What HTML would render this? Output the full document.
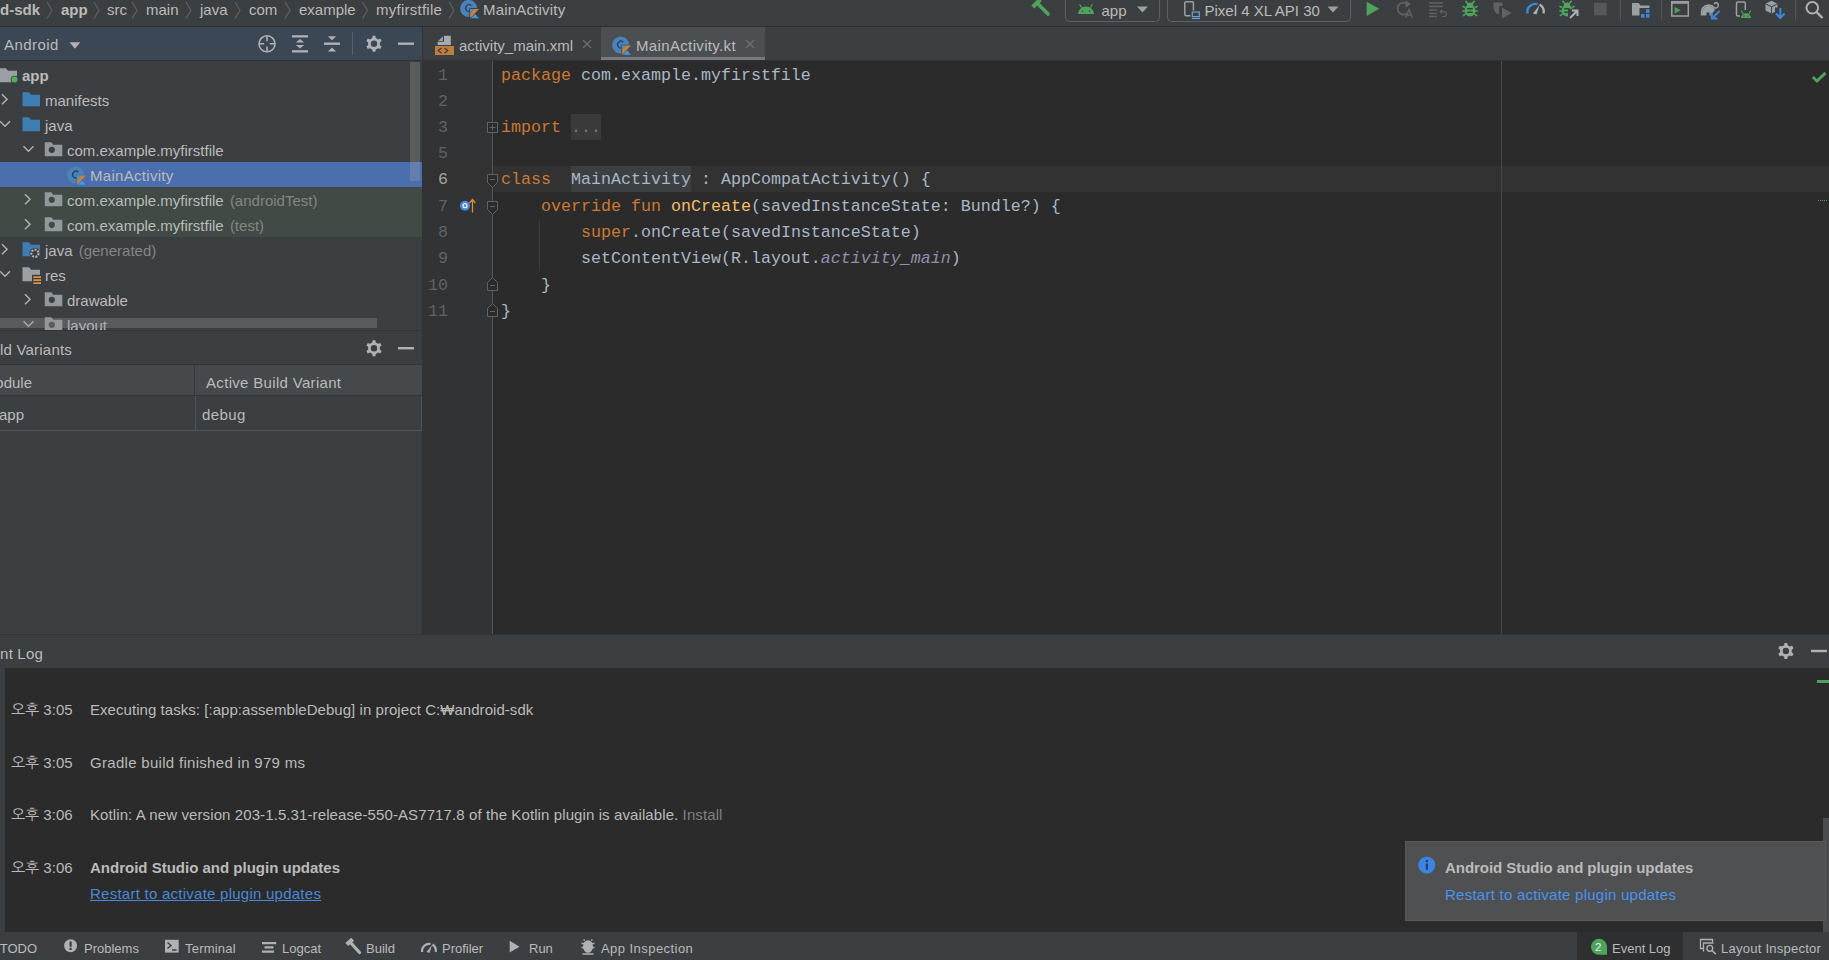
<!DOCTYPE html>
<html lang="en">
<head>
<meta charset="utf-8">
<title>android-sdk – MainActivity.kt</title>
<style>
*{box-sizing:border-box;margin:0;padding:0}
html,body{width:1829px;height:960px;overflow:hidden;background:#3c3f41}
body{position:relative;font-family:"Liberation Sans","NanumGothic","Noto Sans CJK KR",sans-serif;font-size:15px;color:#bbbbbb;-webkit-font-smoothing:antialiased}
.abs{position:absolute}
.t{position:absolute;white-space:nowrap;line-height:20px;height:20px}
.b{font-weight:bold}
.g{color:#858585}
svg{position:absolute;overflow:visible}
/* top nav */
#nav{left:0;top:0;width:1829px;height:26px;background:#3c3f41}
#navline{left:0;top:26px;width:1829px;height:1px;background:#2d2f31}
.sep{position:absolute;top:3px;width:8px;height:20px}
/* project panel */
#phead{left:0;top:27px;width:422px;height:33px;background:#3b4754}
#pheadline{left:0;top:60px;width:422px;height:1px;background:#323537}
#tree{left:0;top:61px;width:422px;height:269px;background:#3c3f41;overflow:hidden}
.row{position:absolute;left:0;width:422px;height:25px}
/* editor */
#tabs{left:422px;top:27px;width:1407px;height:33px;background:#3c3f41}
#tabsline{left:422px;top:60px;width:1407px;height:1px;background:#323232}
#gutter{left:422px;top:61px;width:70px;height:573px;background:#313335}
#gline{left:492px;top:61px;width:1px;height:573px;background:#555555}
#ed{left:493px;top:61px;width:1336px;height:573px;background:#2b2b2b}
.code{position:absolute;white-space:pre;font-family:"Liberation Mono",monospace;font-size:16.667px;line-height:26px;height:26px;color:#a9b7c6;left:501px}
.ln{position:absolute;font-family:"Liberation Mono",monospace;font-size:16.667px;line-height:26px;height:26px;color:#606366;width:30px;text-align:right;left:418px}
.k{color:#cc7832}.f{color:#f4be6c}.i{color:#8e90ad;font-style:italic}
</style>
</head>
<body>
<!-- ===== top navigation bar ===== -->
<div id="nav" class="abs">
<span class="t b" style="right:1789px;top:0px">android-sdk</span>
<span class="t b" style="left:61px;top:0px">app</span>
<span class="t" style="left:107px;top:0px">src</span>
<span class="t" style="left:146px;top:0px">main</span>
<span class="t" style="left:200px;top:0px">java</span>
<span class="t" style="left:249px;top:0px">com</span>
<span class="t" style="left:299px;top:0px">example</span>
<span class="t" style="left:376px;top:0px;letter-spacing:.25px">myfirstfile</span>
<span class="t" style="left:483px;top:0px;letter-spacing:.2px">MainActivity</span>
<svg style="left:0;top:0" width="600" height="27" fill="none" stroke="#606366" stroke-width="1.1">
<path d="M47 2l5 8.300-5 8.300M94 2l5 8.300-5 8.300M132 2l5 8.300-5 8.300M186 2l5 8.300-5 8.300M235 2l5 8.300-5 8.300M285 2l5 8.300-5 8.300M362.500 2l5 8.300-5 8.300M449 2l5 8.300-5 8.300"/>
</svg>
<!-- kotlin class icon -->
<svg style="left:460px;top:0px" width="20" height="19" viewBox="0 0 20 19">
<circle cx="8.700" cy="8.500" r="8.600" fill="#4b83b8"/><path d="M11.200 5.700A3.300 3.300 0 1 0 11.200 10.500" fill="none" stroke="#2a4468" stroke-width="1.400"/><rect x="9.300" y="8.100" width="10" height="10.500" fill="#3c3f41"/><path d="M10.200 9h4l-4 4z" fill="#3a9bf0"/><path d="M14.200 9h4.800l-8.800 9.200v-5.200z" fill="#c8823c"/><path d="M11 18.200l4-4.200 4 4.200z" fill="#3a9bf0"/>
</svg>
<!-- right toolbar -->
<svg id="tb" style="left:1020px;top:0;overflow:hidden" width="809" height="27" viewBox="1020 0 809 27">
<!-- hammer -->
<path d="M1032.800 7l7.500-7.500" stroke="#4fa35c" stroke-width="4.200" fill="none"/><path d="M1037.500 3.500l10.500 10.500" stroke="#4fa35c" stroke-width="3.600" stroke-linecap="round" fill="none"/>
<!-- combos -->
<rect x="1065.500" y="-4.500" width="94" height="26" rx="4" fill="none" stroke="#5e6062"/>
<rect x="1167.500" y="-4.500" width="183" height="26" rx="4" fill="none" stroke="#5e6062"/>
<path d="M1078 14a8.0 7.60 0 0 1 16 0z" fill="#4fa35c"/><path d="M1081.60 7.60l-2-3.400M1090.40 7.60l2-3.400" stroke="#4fa35c" stroke-width="1.100" fill="none"/><circle cx="1082.64" cy="10.96" r=".700" fill="#3c3f41"/><circle cx="1089.36" cy="10.96" r=".700" fill="#3c3f41"/>
<path d="M1137 6.500h11l-5.500 6z" fill="#9aa0a4"/>
<path d="M1327.500 6.500h11l-5.500 6z" fill="#9aa0a4"/>
<!-- device icon -->
<rect x="1184.800" y="1.800" width="8.600" height="14" rx="1.300" fill="none" stroke="#9aa0a4" stroke-width="1.500"/>
<rect x="1190.500" y="10.500" width="10" height="9" fill="#3c3f41"/><rect x="1192.300" y="12" width="7" height="4.600" fill="none" stroke="#6d9fd8" stroke-width="1.200"/><path d="M1192 18.500h8" stroke="#6d9fd8" stroke-width="1.200"/>
<!-- run -->
<path d="M1366.700 1.700v14.300l12.600-7.150z" fill="#4fa35c"/>
<!-- rerun (disabled) -->
<path d="M1408 4.500a6 6 0 1 0 -1 9" fill="none" stroke="#5f6365" stroke-width="1.800"/><path d="M1405.500 0.500l5.500 3.500-5.500 4z" fill="#5f6365"/>
<path d="M1405.800 17.500l3.200-8 3.200 8M1407 15h4" fill="none" stroke="#5f6365" stroke-width="1.400"/>
<!-- attach lines (disabled) -->
<path d="M1429 3h14M1429 6.500h14M1429 10h8M1429 13.500h8M1429 16.500h8" stroke="#5f6365" stroke-width="1.500"/>
<path d="M1440.500 11.500h3.500a2.500 2.500 0 0 1 0 5h-2M1442.500 9.500l-2.300 2 2.300 2" fill="none" stroke="#5f6365" stroke-width="1.200"/>
<!-- debug -->
<ellipse cx="1470" cy="10.5" rx="5.400" ry="6" fill="#4fa35c"/><ellipse cx="1470" cy="4.9" rx="3.200" ry="2.400" fill="#4fa35c"/><path d="M1467.5 3.5l-2-2.800M1472.5 3.5l2-2.800M1465 7.5l-2.600-1.200M1475 7.5l2.600-1.200M1465 11.0h-2.800M1475 11.0h2.800M1465.5 14.0l-2.600 1.800M1474.5 14.0l2.600 1.800" stroke="#4fa35c" stroke-width="1.600" fill="none"/><path d="M1467.2 8.8h5.600M1467.2 12.3h5.600" stroke="#3c3f41" stroke-width="1.400"/>
<!-- coverage (disabled) -->
<path d="M1493.500 2.500h9v3.500h-3.500v7l-1 1.500c-3-2-4.500-4.500-4.500-8z" fill="#5f6365"/><path d="M1502 7.500v11l9.500-5.500z" fill="#5f6365"/>
<!-- profiler -->
<path d="M1527.500 13.500a8 8 0 0 1 10-9.300" fill="none" stroke="#3d86e0" stroke-width="2.400"/>
<path d="M1539.500 4.500a8 8 0 0 1 4 9" fill="none" stroke="#afb1b3" stroke-width="2.400"/>
<path d="M1533 13.500l6.500-8.500-3 9.500z" fill="#afb1b3"/>
<!-- debug attach -->
<ellipse cx="1567" cy="10.5" rx="5.400" ry="6" fill="#4fa35c"/><ellipse cx="1567" cy="4.9" rx="3.200" ry="2.400" fill="#4fa35c"/><path d="M1564.5 3.5l-2-2.800M1569.5 3.5l2-2.800M1562 7.5l-2.600-1.200M1572 7.5l2.600-1.200M1562 11.0h-2.800M1572 11.0h2.800M1562.5 14.0l-2.600 1.800M1571.5 14.0l2.600 1.800" stroke="#4fa35c" stroke-width="1.600" fill="none"/><path d="M1564.2 8.8h5.600M1564.2 12.3h5.600" stroke="#3c3f41" stroke-width="1.400"/>
<rect x="1568" y="9" width="11" height="11" fill="#3c3f41"/>
<path d="M1570 18l7-7M1572 10.500h5.500v5.500" fill="none" stroke="#afb1b3" stroke-width="2"/>
<!-- stop (disabled) -->
<rect x="1594" y="2.800" width="12.600" height="12.600" fill="#56595b"/>
<!-- separators -->
<path d="M1620.500 0v20.500M1661.500 0v20.500M1795.500 0v20.500" stroke="#515456"/>
<!-- project structure -->
<path d="M1632 3h6.500l2 2.500h9v10h-17.500z" fill="#9aa0a4"/><rect x="1639.500" y="8" width="11" height="11" fill="#3c3f41"/>
<rect x="1641" y="14.100" width="3.600" height="3.600" fill="#3d86e0"/><rect x="1646" y="14.100" width="3.600" height="3.600" fill="#3d86e0"/><rect x="1646" y="9.300" width="3.600" height="3.600" fill="#3d86e0"/>
<!-- run window -->
<rect x="1671.800" y="2" width="16.500" height="14" fill="none" stroke="#9aa0a4" stroke-width="1.500"/><path d="M1671 2.500h18" stroke="#9aa0a4" stroke-width="2.500"/>
<path d="M1674.700 7v6.500l6-3.250z" fill="#4fa35c"/>
<!-- gradle elephant -->
<path d="M1701.500 15.500c-0.500-6 2-10 7-10.500 3 0 5 1.500 6.500 3 1.800 0.300 3.300-0.700 3.300-2.700 0-1.600-1-2.600-2.300-2.600-1 0-1.700 0.700-1.700 1.500" fill="none" stroke="#9aa0a4" stroke-width="1.500"/>
<path d="M1702 15.500c0-6 2-9.500 6.500-9.800 3 0 5.500 2 6.500 4.300l-3 3.500v2h-2.500v-3h-3v3h-4.500z" fill="#9aa0a4"/>
<path d="M1719.500 11l-7 7M1711.800 13v5.600h5.700" fill="none" stroke="#3d86e0" stroke-width="2"/>
<!-- avd manager -->
<rect x="1736.500" y="2" width="8.800" height="14" rx="1.300" fill="none" stroke="#9aa0a4" stroke-width="1.500"/>
<rect x="1740" y="10" width="12" height="9" fill="#3c3f41"/>
<path d="M1741 18a5.0 4.75 0 0 1 10 0z" fill="#4fa35c"/><path d="M1743.25 14.00l-2-3.400M1748.75 14.00l2-3.400" stroke="#4fa35c" stroke-width="1.100" fill="none"/><circle cx="1743.90" cy="16.10" r=".700" fill="#3c3f41"/><circle cx="1748.10" cy="16.10" r=".700" fill="#3c3f41"/>
<!-- sdk manager -->
<path d="M1771.500 0.800l6 3v6.700l-6 3-6-3v-6.700z" fill="#9aa0a4"/><path d="M1765.500 3.800l6 3 6-3M1771.500 6.800v6.700" fill="none" stroke="#3c3f41" stroke-width="1"/>
<rect x="1775" y="7.500" width="11" height="12" fill="#3c3f41"/>
<path d="M1780.300 8v9M1776 13.500l4.300 4.500 4.300-4.500" fill="none" stroke="#3d86e0" stroke-width="2"/>
<!-- search -->
<circle cx="1812.300" cy="7.800" r="5.800" fill="none" stroke="#afb1b3" stroke-width="2"/><path d="M1816.500 12l6 6" stroke="#afb1b3" stroke-width="2.400"/>
</svg>
<span class="t" style="left:1101.500px;top:1px">app</span>
<span class="t" style="left:1204.500px;top:1px">Pixel 4 XL API 30</span>
</div>
<div id="navline" class="abs"></div>

<!-- ===== project tool window ===== -->
<div id="phead" class="abs">
<span class="t" style="left:4px;top:8px;letter-spacing:.45px">Android</span>
<svg style="left:0;top:0" width="422" height="33" viewBox="0 27 422 33">
<path d="M69.500 42.300h10.800l-5.400 6.500z" fill="#afb1b3"/>
<g fill="none" stroke="#afb1b3" stroke-width="1.6">
<circle cx="267" cy="43.8" r="8"/><path d="M267 36v5.2M267 46.4v5.2M259 43.8h5.2M269.8 43.8h5.2"/>
</g>
<g fill="#afb1b3">
<rect x="292" y="35.2" width="16" height="2.3"/><rect x="292" y="50.2" width="16" height="2.3"/>
<path d="M295.8 42.6h8.4l-4.2-3.6zM295.8 45h8.4l-4.2 3.6z"/>
<rect x="324" y="42.5" width="16" height="2.4"/>
<path d="M327.8 36.3h8.4l-4.2 4zM327.8 51.4h8.4l-4.2-4z"/>
<rect x="352" y="32" width="1" height="23" fill="#55606b"/>
<rect x="398" y="42.5" width="16" height="2.4"/>
</g>
<path transform="translate(374 43.8)" fill="#afb1b3" fill-rule="evenodd" d="M-1.77 -5.73L-1.37 -7.98L1.37 -7.98L1.77 -5.73L4.08 -4.40L6.23 -5.18L7.60 -2.80L5.85 -1.33L5.85 1.33L7.60 2.80L6.23 5.18L4.08 4.40L1.77 5.73L1.37 7.98L-1.37 7.98L-1.77 5.73L-4.08 4.40L-6.23 5.18L-7.60 2.80L-5.85 1.33L-5.85 -1.33L-7.60 -2.80L-6.23 -5.18L-4.08 -4.40ZM3.20 0A3.20 3.20 0 1 0 -3.20 0A3.20 3.20 0 1 0 3.20 0Z"/>
</svg>
</div>
<div id="pheadline" class="abs"></div>
<div id="tree" class="abs">
<div class="abs" style="left:0;top:101px;width:422px;height:25px;background:#4b6eaf"></div>
<div class="abs" style="left:0;top:126px;width:422px;height:50px;background:#414a44"></div>
<div class="abs" style="left:410px;top:1px;width:10px;height:119px;background:rgba(166,168,170,.28)"></div>
<svg style="left:0;top:0" width="422" height="271" viewBox="0 61 422 271">
<g transform="translate(0 -0.700)">
<path d="M-0.5 69h6.5l2 2.5h9v11.5h-17.5z" fill="#9aa0a4"/><circle cx="14.500" cy="80.200" r="3.800" fill="#3c3f41"/><circle cx="14.500" cy="80.200" r="3" fill="#4fb15a"/>
<path d="M2 95l5 5-5 5" fill="none" stroke="#afb1b3" stroke-width="1.5"/><path d="M22.5 93h6.5l2 2.5h9v11.5h-17.5z" fill="#3d7fb3"/>
<path d="M0 122l5 5 5-5" fill="none" stroke="#afb1b3" stroke-width="1.5"/><path d="M22.5 118h6.5l2 2.5h9v11.5h-17.5z" fill="#3d7fb3"/>
<path d="M23.5 147l5 5 5-5" fill="none" stroke="#afb1b3" stroke-width="1.5"/><path d="M44.8 143h6.5l2 2.5h9v11.5h-17.5z" fill="#92989c"/><circle cx="51.800" cy="150.500" r="3.100" fill="#3c3f41"/>
<g transform="translate(67 167.200)"><circle cx="8.700" cy="8.500" r="8.600" fill="#4b83b8"/><path d="M11.200 5.700A3.300 3.300 0 1 0 11.200 10.500" fill="none" stroke="#2a4468" stroke-width="1.400"/><rect x="9.300" y="8.100" width="10" height="10.500" fill="#4b6eaf"/><path d="M10.200 9h4l-4 4z" fill="#3a9bf0"/><path d="M14.200 9h4.800l-8.800 9.200v-5.200z" fill="#c8823c"/><path d="M11 18.200l4-4.200 4 4.200z" fill="#3a9bf0"/></g>
<path d="M25 195l5 5-5 5" fill="none" stroke="#afb1b3" stroke-width="1.5"/><path d="M44.8 193h6.5l2 2.5h9v11.5h-17.5z" fill="#92989c"/><circle cx="51.800" cy="200.500" r="3.100" fill="#414a44"/>
<path d="M25 220l5 5-5 5" fill="none" stroke="#afb1b3" stroke-width="1.5"/><path d="M44.8 218h6.5l2 2.5h9v11.5h-17.5z" fill="#92989c"/><circle cx="51.800" cy="225.500" r="3.100" fill="#414a44"/>
<path d="M2 245l5 5-5 5" fill="none" stroke="#afb1b3" stroke-width="1.5"/><path d="M22.5 243h6.5l2 2.5h9v11.5h-17.5z" fill="#3d7fb3"/><circle cx="35" cy="254" r="5.5" fill="#3c3f41"/><circle cx="35" cy="254" r="3.6" fill="none" stroke="#afb1b3" stroke-width="2.2" stroke-dasharray="2 1.2"/>
<path d="M0 272l5 5 5-5" fill="none" stroke="#afb1b3" stroke-width="1.5"/><path d="M22.5 268h6.5l2 2.5h9v11.5h-17.5z" fill="#9aa0a4"/><rect x="32" y="275.500" width="10" height="11" fill="#3c3f41"/><path d="M33.300 277.900h7.700M33.300 280.900h7.700M33.300 283.900h7.700" stroke="#e0913f" stroke-width="1.700"/>
<path d="M25 295l5 5-5 5" fill="none" stroke="#afb1b3" stroke-width="1.5"/><path d="M44.8 293h6.5l2 2.5h9v11.5h-17.5z" fill="#92989c"/><circle cx="51.800" cy="300.500" r="3.100" fill="#3c3f41"/>
<path d="M23.5 322l5 5 5-5" fill="none" stroke="#afb1b3" stroke-width="1.5"/><path d="M44.8 318h6.5l2 2.5h9v11.5h-17.5z" fill="#92989c"/><circle cx="51.800" cy="325.500" r="3.100" fill="#3c3f41"/>
</g>
</svg>
<span class="t b" style="left:22px;top:5px">app</span>
<span class="t" style="left:45px;top:30px">manifests</span>
<span class="t" style="left:45px;top:55px">java</span>
<span class="t" style="left:67px;top:80px">com.example.myfirstfile</span>
<span class="t" style="left:90px;top:105px;letter-spacing:.3px">MainActivity</span>
<span class="t" style="left:67px;top:130px">com.example.myfirstfile <span class="g" style="margin-left:2px">(androidTest)</span></span>
<span class="t" style="left:67px;top:155px">com.example.myfirstfile <span class="g" style="margin-left:2px">(test)</span></span>
<span class="t" style="left:45px;top:180px">java <span class="g" style="margin-left:2px">(generated)</span></span>
<span class="t" style="left:45px;top:205px">res</span>
<span class="t" style="left:67px;top:230px">drawable</span>
<span class="t" style="left:67px;top:255px">layout</span>
<div class="abs" style="left:0;top:257px;width:377px;height:10px;background:rgba(150,152,154,.33)"></div>
</div>

<!-- ===== build variants tool window ===== -->
<div class="abs" style="left:0;top:330px;width:422px;height:1px;background:#323537"></div>
<div id="bv" class="abs" style="left:0;top:331px;width:422px;height:303px;background:#3c3f41">
<span class="t" style="right:350px;top:9px;letter-spacing:.2px">Build Variants</span>
<svg style="left:0;top:0" width="422" height="34" viewBox="0 331 422 34">
<path transform="translate(374 348.2)" fill="#afb1b3" fill-rule="evenodd" d="M-1.77 -5.73L-1.37 -7.98L1.37 -7.98L1.77 -5.73L4.08 -4.40L6.23 -5.18L7.60 -2.80L5.85 -1.33L5.85 1.33L7.60 2.80L6.23 5.18L4.08 4.40L1.77 5.73L1.37 7.98L-1.37 7.98L-1.77 5.73L-4.08 4.40L-6.23 5.18L-7.60 2.80L-5.85 1.33L-5.85 -1.33L-7.60 -2.80L-6.23 -5.18L-4.08 -4.40ZM3.20 0A3.20 3.20 0 1 0 -3.20 0A3.20 3.20 0 1 0 3.20 0Z"/>
<rect x="398" y="347" width="16" height="2.4" fill="#afb1b3"/>
</svg>
<div class="abs" style="left:0;top:33px;width:422px;height:1px;background:#323537"></div>
<div class="abs" style="left:0;top:34px;width:422px;height:30px;background:#45494b"></div>
<div class="abs" style="left:194px;top:34px;width:1px;height:30px;background:#34383a"></div>
<div class="abs" style="left:0;top:64px;width:422px;height:1px;background:#34383a"></div>
<span class="t" style="right:390px;top:42px">Module</span>
<span class="t" style="left:206px;top:42px;letter-spacing:.32px">Active Build Variant</span>
<div class="abs" style="left:195px;top:65px;width:1px;height:35px;background:#4f5355"></div>
<div class="abs" style="left:0;top:99px;width:422px;height:1px;background:#4f5355"></div>
<div class="abs" style="left:421px;top:65px;width:1px;height:35px;background:#4f5355"></div>
<span class="t" style="right:398px;top:74px">app</span>
<span class="t" style="left:202px;top:74px;letter-spacing:.4px">debug</span>
</div>

<!-- ===== editor ===== -->
<div id="tabs" class="abs">
<div class="abs" style="left:179px;top:0;width:164px;height:33px;background:#4b4f52"></div>
<div class="abs" style="left:179px;top:30px;width:164px;height:4px;background:#747a80"></div>
<svg style="left:0;top:0" width="360" height="33" viewBox="422 27 360 33">
<!-- xml layout file icon -->
<path d="M444 35.800h6.800v9.200h-13.200v-3.200h6.400z" fill="#a3abb1"/><path d="M438.200 41l4.700-4.700v4.700z" fill="#9aa0a4"/>
<rect x="435" y="46" width="19" height="9" fill="#b98041"/>
<path d="M441.500 48l-3.300 2.600 3.300 2.600M444.500 48l3.300 2.600-3.300 2.600" fill="none" stroke="#5a2a2a" stroke-width="1.200"/>
<!-- close x -->
<path d="M583 40l8 8M591 40l-8 8" stroke="#6e7173" stroke-width="1.200"/>
<path d="M746 40l8 8M754 40l-8 8" stroke="#6e7173" stroke-width="1.200"/>
<!-- kotlin class icon -->
<g transform="translate(612 36.500)"><circle cx="8.700" cy="8.500" r="8.600" fill="#4b83b8"/><path d="M11.200 5.700A3.300 3.300 0 1 0 11.200 10.500" fill="none" stroke="#2a4468" stroke-width="1.400"/><rect x="9.300" y="8.100" width="10" height="10.500" fill="#4b4f52"/><path d="M10.200 9h4l-4 4z" fill="#3a9bf0"/><path d="M14.200 9h4.800l-8.800 9.200v-5.200z" fill="#c8823c"/><path d="M11 18.200l4-4.200 4 4.200z" fill="#3a9bf0"/></g>
</svg>
<span class="t" style="left:37px;top:9px">activity_main.xml</span>
<span class="t" style="left:214px;top:9px;letter-spacing:.35px">MainActivity.kt</span>
</div>
<div id="tabsline" class="abs"></div>
<div class="abs" style="left:422px;top:27px;width:1px;height:34px;background:#323537"></div>
<div id="gutter" class="abs"></div>
<div id="ed" class="abs"></div>
<div class="abs" style="left:422px;top:166px;width:1407px;height:26px;background:#323232"></div>
<div class="abs" style="left:571px;top:114px;width:30px;height:26px;background:#3a3a3a"></div>
<div class="abs" style="left:571px;top:166px;width:120px;height:26px;background:#3d4042"></div>
<div class="abs" style="left:492px;top:61px;width:1px;height:573px;background:#555555"></div>
<div class="abs" style="left:1501px;top:61px;width:1px;height:573px;background:#4a4a4a"></div>
<svg style="left:422px;top:61px" width="200" height="573" viewBox="422 61 200 573">
<rect x="487.500" y="122.500" width="10" height="10" fill="#2b2b2b" stroke="#606366"/><path d="M489.500 127.500h6M492.500 124.500v6" stroke="#606366"/>
<path d="M487.5 174.5h10v8l-5 5-5-5z" fill="#2b2b2b" stroke="#606366" stroke-width="1"/><path d="M490 179.5h5" stroke="#606366" stroke-width="1"/>
<path d="M487.5 201.5h10v8l-5 5-5-5z" fill="#2b2b2b" stroke="#606366" stroke-width="1"/><path d="M490 206.5h5" stroke="#606366" stroke-width="1"/>
<path d="M487.5 290.5h10v-8l-5-5-5 5z" fill="#2b2b2b" stroke="#606366" stroke-width="1"/><path d="M490 285.5h5" stroke="#606366" stroke-width="1"/>
<path d="M487.5 316.5h10v-8l-5-5-5 5z" fill="#2b2b2b" stroke="#606366" stroke-width="1"/><path d="M490 311.5h5" stroke="#606366" stroke-width="1"/>
<path d="M539.500 219v52" stroke="#393939" stroke-width="1"/>
<circle cx="465" cy="205.700" r="5" fill="#4a86d8"/><circle cx="465" cy="205.700" r="2" fill="none" stroke="#e8eef7" stroke-width="1.300"/>
<path d="M472.500 212.500v-12M469.500 203l3-3.500 3 3.500" fill="none" stroke="#e8892f" stroke-width="1.300"/>
</svg>
<svg style="left:1800px;top:61px" width="29" height="160" viewBox="1800 61 29 160">
<path d="M1812.800 77l4.200 4 8.500-8.200" fill="none" stroke="#4fa35c" stroke-width="3"/>
<path d="M1818 200.500h10" stroke="#4fa35c" stroke-width="1" stroke-dasharray="1 1"/>
</svg>
<span class="ln" style="top:63px">1</span>
<span class="code" style="top:63px"><span class="k">package</span> com.example.myfirstfile</span>
<span class="ln" style="top:89px">2</span>
<span class="ln" style="top:115px">3</span>
<span class="code" style="top:115px"><span class="k">import</span> <span style="color:#7a7a7a">...</span></span>
<span class="ln" style="top:141px">5</span>
<span class="ln" style="top:167px;color:#a4a3a3">6</span>
<span class="code" style="top:167px"><span class="k">class</span>  MainActivity : AppCompatActivity() {</span>
<span class="ln" style="top:194px">7</span>
<span class="code" style="top:194px">    <span class="k">override fun</span> <span class="f">onCreate</span>(savedInstanceState: Bundle?) {</span>
<span class="ln" style="top:220px">8</span>
<span class="code" style="top:220px">        <span class="k">super</span>.onCreate(savedInstanceState)</span>
<span class="ln" style="top:246px">9</span>
<span class="code" style="top:246px">        setContentView(R.layout.<span class="i">activity_main</span>)</span>
<span class="ln" style="top:273px">10</span>
<span class="code" style="top:273px">    }</span>
<span class="ln" style="top:299px">11</span>
<span class="code" style="top:299px">}</span>

<!-- ===== event log tool window ===== -->
<div class="abs" style="left:0;top:634px;width:1829px;height:1px;background:#323537"></div>
<div id="evhead" class="abs" style="left:0;top:635px;width:1829px;height:33px;background:#3c3f41">
<span class="t" style="right:1786px;top:9px;letter-spacing:.2px">Event Log</span>
<svg style="left:1760px;top:0" width="69" height="34" viewBox="1760 635 69 34">
<path transform="translate(1785.900 651)" fill="#afb1b3" fill-rule="evenodd" d="M-1.77 -5.73L-1.37 -7.98L1.37 -7.98L1.77 -5.73L4.08 -4.40L6.23 -5.18L7.60 -2.80L5.85 -1.33L5.85 1.33L7.60 2.80L6.23 5.18L4.08 4.40L1.77 5.73L1.37 7.98L-1.37 7.98L-1.77 5.73L-4.08 4.40L-6.23 5.18L-7.60 2.80L-5.85 1.33L-5.85 -1.33L-7.60 -2.80L-6.23 -5.18L-4.08 -4.40ZM3.20 0A3.20 3.20 0 1 0 -3.20 0A3.20 3.20 0 1 0 3.20 0Z"/>
<rect x="1811" y="649.800" width="16" height="2.400" fill="#afb1b3"/>
</svg>
</div>
<div id="ev" class="abs" style="left:5px;top:668px;width:1824px;height:264px;background:#2b2b2b">
<span class="t" style="left:6px;top:32px">오후 3:05</span><span class="t" style="left:85px;top:32px;letter-spacing:.05px">Executing tasks: [:app:assembleDebug] in project C:₩android-sdk</span>
<span class="t" style="left:6px;top:85px">오후 3:05</span><span class="t" style="left:85px;top:85px;letter-spacing:.3px">Gradle build finished in 979 ms</span>
<span class="t" style="left:6px;top:137px">오후 3:06</span><span class="t" style="left:85px;top:137px;letter-spacing:.1px">Kotlin: A new version 203-1.5.31-release-550-AS7717.8 of the Kotlin plugin is available. <span style="color:#808080">Install</span></span>
<span class="t" style="left:6px;top:190px">오후 3:06</span><span class="t b" style="left:85px;top:190px">Android Studio and plugin updates</span>
<span class="t" style="left:85px;top:216px;color:#4a88d8;text-decoration:underline;letter-spacing:.25px">Restart to activate plugin updates</span>
<div class="abs" style="left:1812px;top:12px;width:12px;height:3px;background:#4fa15c"></div>
<div class="abs" style="left:1818px;top:150px;width:6px;height:114px;background:#4a4c4e"></div>
<!-- notification balloon -->
<div class="abs" style="left:1400px;top:173px;width:421px;height:80px;background:#4e5052;border:1px solid #585a5c"></div>
<svg style="left:1412px;top:187px" width="20" height="20" viewBox="0 0 20 20"><circle cx="9.800" cy="10" r="8.600" fill="#3d84e0"/><rect x="8.800" y="8.500" width="2.200" height="6.300" fill="#22406e"/><rect x="8.800" y="5" width="2.200" height="2.200" fill="#22406e"/></svg>
<span class="t b" style="left:1440px;top:190px;letter-spacing:-.05px">Android Studio and plugin updates</span>
<span class="t" style="left:1440px;top:217px;color:#4a93ee;letter-spacing:.25px">Restart to activate plugin updates</span>
</div>

<!-- ===== bottom tool stripe ===== -->
<div id="stripe" class="abs" style="left:0;top:932px;width:1829px;height:28px;background:#3c3f41;font-size:13px">
<div class="abs" style="left:1577px;top:0;width:106px;height:28px;background:#2d2f30"></div>
<span class="t" style="right:1792px;top:7px">TODO</span>
<span class="t" style="left:84px;top:7px">Problems</span>
<span class="t" style="left:185px;top:7px;letter-spacing:.2px">Terminal</span>
<span class="t" style="left:282px;top:7px">Logcat</span>
<span class="t" style="left:366px;top:7px">Build</span>
<span class="t" style="left:442px;top:7px">Profiler</span>
<span class="t" style="left:529px;top:7px">Run</span>
<span class="t" style="left:601px;top:7px;letter-spacing:.45px">App Inspection</span>
<span class="t" style="left:1612px;top:7px">Event Log</span>
<span class="t" style="left:1721px;top:7px;letter-spacing:.25px">Layout Inspector</span>
<svg id="sicons" style="left:0;top:0" width="1829" height="28" viewBox="0 932 1829 28">
<!-- problems -->
<circle cx="70.600" cy="945.700" r="6.500" fill="#afb1b3"/><rect x="69.500" y="941.500" width="2.200" height="5.200" fill="#3c3f41"/><rect x="69.500" y="947.800" width="2.200" height="2.200" fill="#3c3f41"/>
<!-- terminal -->
<rect x="165" y="939.800" width="13.700" height="12.800" fill="#afb1b3"/><path d="M167.500 942.500l3.500 3-3.500 3M172 950h4.500" fill="none" stroke="#3c3f41" stroke-width="1.400"/>
<!-- logcat -->
<path d="M262 943.200h14.200M264.500 947.400h9M262 951.600h12" stroke="#afb1b3" stroke-width="2.200"/>
<!-- build hammer -->
<path d="M346.800 944.500l5.800-5.300" stroke="#afb1b3" stroke-width="4.200" fill="none"/><path d="M350.500 942.500l9 10" stroke="#afb1b3" stroke-width="3.300" stroke-linecap="round" fill="none"/>
<!-- profiler -->
<path d="M422 952a7 7.500 0 0 1 8.500-8" fill="none" stroke="#afb1b3" stroke-width="2.200"/><path d="M432.500 944.500a7 7.500 0 0 1 3.300 7.500" fill="none" stroke="#afb1b3" stroke-width="2.200"/><path d="M426.500 952l5.500-7-2.500 8z" fill="#afb1b3"/>
<!-- run -->
<path d="M509.700 940.800v11.800l9.800-5.900z" fill="#afb1b3"/>
<!-- app inspection -->
<ellipse cx="588" cy="946.500" rx="5" ry="6.300" fill="#afb1b3"/><path d="M581.500 943.500h13M581.500 947.500h13M582.500 954h11" stroke="#afb1b3" stroke-width="1.500"/><path d="M585 940.500l-1.500-1M591 940.500l1.500-1" stroke="#afb1b3" stroke-width="1.200"/>
<!-- event log bubble -->
<path d="M1599 938.800a8 8 0 0 1 8 8v8h-8a8 8 0 0 1 0-16z" fill="#4fa35c"/>
<!-- layout inspector -->
<path d="M1703.500 948.500h-3v-9h12v2.500" fill="none" stroke="#afb1b3" stroke-width="1.300"/><path d="M1703.500 951.500v-8.500h10" fill="none" stroke="#afb1b3" stroke-width="1.300"/>
<circle cx="1709.800" cy="948.300" r="2.900" fill="none" stroke="#afb1b3" stroke-width="1.400"/><path d="M1712 950.500l3.800 3.600" stroke="#afb1b3" stroke-width="1.600"/>
</svg>
<span class="t" style="left:1595px;top:5px;font-size:11.500px;color:#e8f0e8">2</span>
</div>

</body>
</html>
